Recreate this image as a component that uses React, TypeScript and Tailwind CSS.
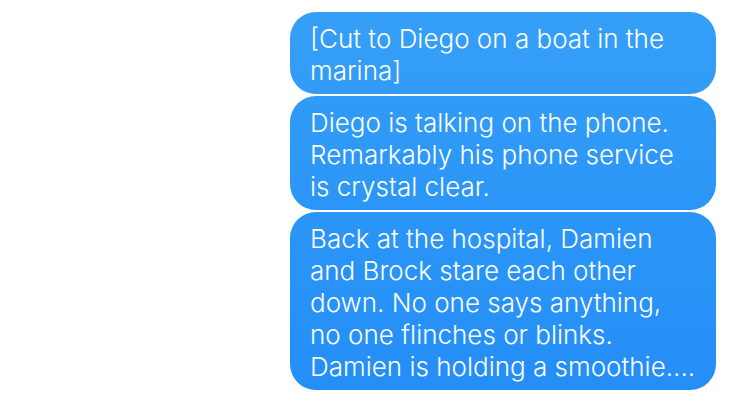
const messages: string[][] = [
  ["[Cut to Diego on a boat in the", "marina]"],
  ["Diego is talking on the phone.", "Remarkably his phone service", "is crystal clear."],
  [
    "Back at the hospital, Damien",
    "and Brock stare each other",
    "down. No one says anything,",
    "no one flinches or blinks.",
    "Damien is holding a smoothie....",
  ],
];

const tones = [
  "bg-linear-to-b from-[#359ff8] to-[#319bf7]",
  "bg-linear-to-b from-[#319bf7] to-[#2b96f7]",
  "bg-linear-to-b from-[#2b96f7] to-[#248ef7]",
];

export default function App() {
  return (
    <main className="min-h-screen bg-white pt-3 pr-8 pb-3 font-['Inter','Liberation_Sans',sans-serif] font-light">
      <ol className="flex flex-col items-end gap-0.5">
        {messages.map((lines, i) => (
          <li
            key={i}
            className={`w-full max-w-[426px] rounded-[26px] px-5 pt-[11px] pb-[7px] text-[26px] leading-8 whitespace-nowrap text-white ${tones[i]}`}
          >
            {lines.map((line) => (
              <span key={line} className="block">
                {line}
              </span>
            ))}
          </li>
        ))}
      </ol>
    </main>
  );
}
